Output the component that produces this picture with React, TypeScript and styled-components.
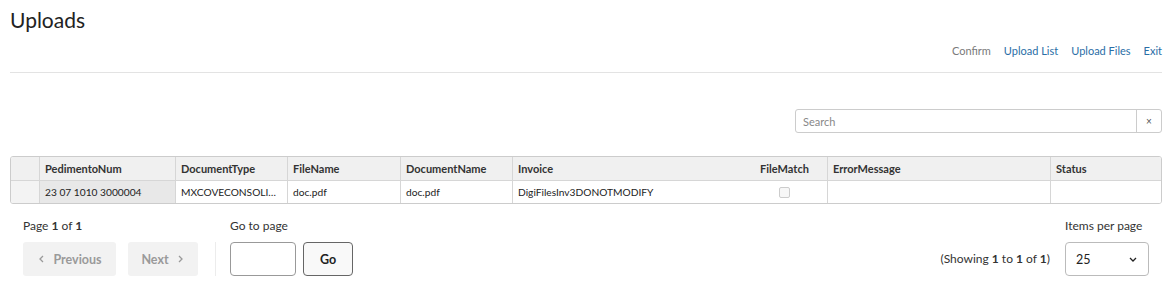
import React from 'react';
import styled, { createGlobalStyle } from 'styled-components';

const GlobalStyle = createGlobalStyle`
  body {
    margin: 0;
    background: #fff;
    font-family: Lato, 'Noto Sans', sans-serif;
    color: #333;
  }
`;

const Page = styled.div`
  padding: 0 9px 0 10px;
  width: 1152px;
`;

const Title = styled.h1`
  margin: 0;
  padding-top: 7px;
  font-size: 21px;
  font-weight: 400;
  color: #222;
  line-height: 26px;
`;

const Nav = styled.nav`
  display: flex;
  justify-content: flex-end;
  gap: 13px;
  margin-top: 10px;
  font-size: 11px;
  line-height: 15px;
`;

const NavLink = styled.a<{ $muted?: boolean }>`
  color: ${(p) => (p.$muted ? '#7a7a7a' : '#2a6ea6')};
  text-decoration: none;
`;

const Rule = styled.hr`
  margin: 14px 0 0;
  border: 0;
  border-top: 1px solid #e3e3e3;
`;

const SearchRow = styled.div`
  display: flex;
  justify-content: flex-end;
  margin-top: 36px;
`;

const SearchBox = styled.div`
  display: flex;
  width: 367px;
  height: 24px;
  border: 1px solid #ccc;
  border-radius: 3px;
  box-sizing: border-box;
`;

const SearchInput = styled.input`
  flex: 1;
  border: 0;
  outline: none;
  padding: 0 7px;
  font-family: inherit;
  font-size: 11px;
  color: #333;
  background: transparent;
  &::placeholder {
    color: #888;
  }
`;

const ClearButton = styled.button`
  width: 25px;
  border: 0;
  border-left: 1px solid #ccc;
  background: transparent;
  font-size: 10px;
  color: #555;
  padding: 0;
`;

const Table = styled.div`
  margin-top: 23px;
  border: 1px solid #ccc;
  border-radius: 3px;
  overflow: hidden;
  display: grid;
  grid-template-columns: 28px 136px 112px 113px 112px 230px 85px 223px 1fr;
`;

const HeadCell = styled.div<{ $center?: boolean; $noLeft?: boolean }>`
  height: 23px;
  line-height: 23px;
  padding: 0 5px;
  background: #f0f0f0;
  font-size: 11px;
  font-weight: 700;
  color: #333;
  border-left: ${(p) => (p.$noLeft ? '0' : '1px solid #d6d6d6')};
  border-bottom: 1px solid #d6d6d6;
  text-align: ${(p) => (p.$center ? 'center' : 'left')};
  &:first-child {
    border-left: 0;
  }
`;

const Cell = styled.div<{ $bg?: string; $center?: boolean; $noLeft?: boolean }>`
  height: 22px;
  padding: 0 5px;
  background: ${(p) => p.$bg || '#fff'};
  color: #222;
  font-size: 10.2px;
  border-left: ${(p) => (p.$noLeft ? '0' : '1px solid #d6d6d6')};
  white-space: nowrap;
  overflow: hidden;
  display: flex;
  align-items: center;
  justify-content: ${(p) => (p.$center ? 'center' : 'flex-start')};
`;

const Check = styled.span`
  width: 9px;
  height: 9px;
  border: 1px solid #ccc;
  border-radius: 2px;
  background: #f7f7f7;
`;

const Footer = styled.div`
  display: flex;
  align-items: flex-end;
  margin-top: 13px;
  padding: 0 13px;
`;

const Group = styled.div`
  display: flex;
  flex-direction: column;
  gap: 8px;
`;

const Label = styled.div`
  font-size: 12px;
  line-height: 17px;
  color: #333;
  white-space: nowrap;
`;

const Buttons = styled.div<{ $gap?: number }>`
  display: flex;
  gap: ${(p) => p.$gap ?? 12}px;
`;

const PagerButton = styled.button<{ $width: number }>`
  width: ${(p) => p.$width}px;
  height: 34px;
  padding: 0;
  border: 0;
  border-radius: 3px;
  background: #f2f2f2;
  color: #9a9a9a;
  font-family: inherit;
  font-size: 12.5px;
  font-weight: 700;
  display: flex;
  align-items: center;
  justify-content: center;
  gap: 6px;
`;

const Divider = styled.div`
  width: 1px;
  height: 34px;
  background: #ececec;
  margin: 0 14px 0 17px;
`;

const PageInput = styled.input`
  width: 66px;
  height: 34px;
  box-sizing: border-box;
  border: 1px solid #999;
  border-radius: 4px;
`;

const GoButton = styled.button`
  width: 50px;
  height: 34px;
  border: 1px solid #666;
  border-radius: 4px;
  background: #f9f9f9;
  color: #222;
  font-family: inherit;
  font-size: 12.5px;
  font-weight: 700;
`;

const Spacer = styled.div`
  flex: 1;
`;

const Showing = styled.div`
  font-size: 12px;
  line-height: 34px;
  color: #333;
  margin-right: 15px;
`;

const Select = styled.div`
  width: 84px;
  height: 34px;
  box-sizing: border-box;
  border: 1px solid #bbb;
  border-radius: 4px;
  display: flex;
  align-items: center;
  justify-content: space-between;
  padding: 0 10px;
  font-size: 12.5px;
  color: #222;
`;

const Chevron = ({ dir }: { dir: 'left' | 'right' | 'down' }) => {
  const d =
    dir === 'left' ? 'M6 2 L3 5 L6 8' : dir === 'right' ? 'M4 2 L7 5 L4 8' : 'M2 4 L5 7 L8 4';
  return (
    <svg width="10" height="10" viewBox="0 0 10 10">
      <path d={d} fill="none" stroke="currentColor" strokeWidth="1.3" />
    </svg>
  );
};

const columns = [
  '',
  'PedimentoNum',
  'DocumentType',
  'FileName',
  'DocumentName',
  'Invoice',
  'FileMatch',
  'ErrorMessage',
  'Status',
];

export default function App() {
  return (
    <Page>
      <GlobalStyle />
      <Title>Uploads</Title>
      <Nav>
        <NavLink $muted>Confirm</NavLink>
        <NavLink>Upload List</NavLink>
        <NavLink>Upload Files</NavLink>
        <NavLink>Exit</NavLink>
      </Nav>
      <Rule />
      <SearchRow>
        <SearchBox>
          <SearchInput placeholder="Search" />
          <ClearButton>×</ClearButton>
        </SearchBox>
      </SearchRow>
      <Table>
        {columns.map((c) => (
          <HeadCell key={c || 'sel'} $center={c === 'FileMatch'} $noLeft={c === 'FileMatch'}>
            {c}
          </HeadCell>
        ))}
        <Cell $bg="#f3f3f3" $noLeft />
        <Cell $bg="#e8e8e8">23 07 1010 3000004</Cell>
        <Cell>MXCOVECONSOLI…</Cell>
        <Cell>doc.pdf</Cell>
        <Cell>doc.pdf</Cell>
        <Cell>DigiFilesInv3DONOTMODIFY</Cell>
        <Cell $center $noLeft>
          <Check />
        </Cell>
        <Cell />
        <Cell />
      </Table>
      <Footer>
        <Group>
          <Label>
            Page <b>1</b> of <b>1</b>
          </Label>
          <Buttons>
            <PagerButton $width={93}>
              <Chevron dir="left" /> Previous
            </PagerButton>
            <PagerButton $width={70}>
              Next <Chevron dir="right" />
            </PagerButton>
          </Buttons>
        </Group>
        <Divider />
        <Group>
          <Label>Go to page</Label>
          <Buttons $gap={7}>
            <PageInput />
            <GoButton>Go</GoButton>
          </Buttons>
        </Group>
        <Spacer />
        <Showing>
          (Showing <b>1</b> to <b>1</b> of <b>1</b>)
        </Showing>
        <Group>
          <Label>Items per page</Label>
          <Select>
            25 <Chevron dir="down" />
          </Select>
        </Group>
      </Footer>
    </Page>
  );
}
